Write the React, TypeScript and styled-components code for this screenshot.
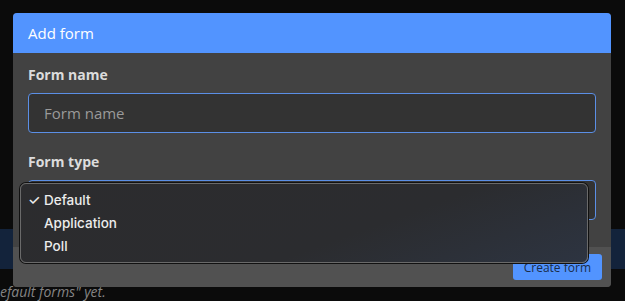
import React from 'react'
import styled, { createGlobalStyle } from 'styled-components'

const Global = createGlobalStyle`
  html, body {
    margin: 0;
    padding: 0;
    background: #0b0b0b;
  }
  * { box-sizing: border-box; }
`

const Page = styled.div`
  position: relative;
  width: 625px;
  height: 301px;
  overflow: hidden;
  background: #0b0b0b;
  padding-top: 229px;
  font-family: "Open Sans", "Liberation Sans", sans-serif;
`

const BackBar = styled.div`
  height: 40px;
  background: #13233b;
`

const BackText = styled.div`
  margin-top: 13px;
  font-size: 14px;
  font-style: italic;
  color: #858585;
  line-height: 20px;
  white-space: nowrap;
`

const Modal = styled.div`
  position: absolute;
  left: 13px;
  top: 13px;
  width: 598px;
  border-radius: 4px;
  overflow: hidden;
  background: #424242;
  display: flex;
  flex-direction: column;
`

const Header = styled.div`
  height: 40px;
  background: #5294ff;
  color: #ffffff;
  font-size: 15px;
  display: flex;
  align-items: center;
  padding: 0 15px;
`

const Body = styled.div`
  padding: 12px 15px 27px;
  display: flex;
  flex-direction: column;
`

const Label = styled.div<{ $top?: number }>`
  font-size: 14px;
  font-weight: 700;
  color: #dcdcdc;
  line-height: 20px;
  margin-top: ${({ $top }) => $top ?? 0}px;
  margin-bottom: 8px;
`

const Field = styled.div`
  position: relative;
  height: 40px;
  border: 1px solid #5b8fe6;
  border-radius: 4px;
  background: #333333;
  display: flex;
  align-items: center;
  padding: 0 15px;
  font-size: 15px;
  color: #9a9a9a;
`

const Arrow = styled.svg`
  position: absolute;
  right: 5px;
  top: 14px;
`

const Footer = styled.div`
  height: 40px;
  background: #515151;
  display: flex;
  align-items: center;
  justify-content: flex-end;
  padding-right: 9px;
`

const Button = styled.div`
  height: 26px;
  padding: 0 11px;
  border-radius: 3px;
  background: #5294ff;
  color: #1a2d4a;
  font-size: 12px;
  display: flex;
  align-items: center;
`

const Menu = styled.div`
  position: absolute;
  left: 20px;
  top: 183px;
  width: 568px;
  height: 80px;
  padding: 4px 0;
  border-radius: 6px;
  background: linear-gradient(160deg, #2c2c2e 0%, #2b2c2f 60%, #2d3441 100%);
  border: 1px solid #6a6a6a;
  box-shadow: 0 0 0 1px #111;
  font-family: Inter, "Noto Sans", sans-serif;
`

const Item = styled.div`
  height: 23px;
  display: flex;
  align-items: center;
  padding-left: 7px;
  color: #ececec;
  font-size: 13.5px;
  font-weight: 500;
`

const Check = styled.span`
  width: 16px;
  font-size: 14px;
`

const options = ['Default', 'Application', 'Poll']

export default function App() {
  return (
    <>
      <Global />
      <Page>
        <BackBar />
        <BackText>efault forms" yet.</BackText>

        <Modal>
          <Header>Add form</Header>
          <Body>
            <Label>Form name</Label>
            <Field>Form name</Field>
            <Label $top={19}>Form type</Label>
            <Field>
              <Arrow width="6" height="8" viewBox="0 0 6 8">
                <path d="M1 6 L3 3" stroke="#e0e0e0" strokeWidth="1.4" strokeLinecap="round" />
              </Arrow>
            </Field>
          </Body>
          <Footer>
            <Button>Create form</Button>
          </Footer>
        </Modal>

        <Menu>
          {options.map((o, i) => (
            <Item key={o}>
              <Check>{i === 0 ? '✓' : ''}</Check>
              {o}
            </Item>
          ))}
        </Menu>
      </Page>
    </>
  )
}
